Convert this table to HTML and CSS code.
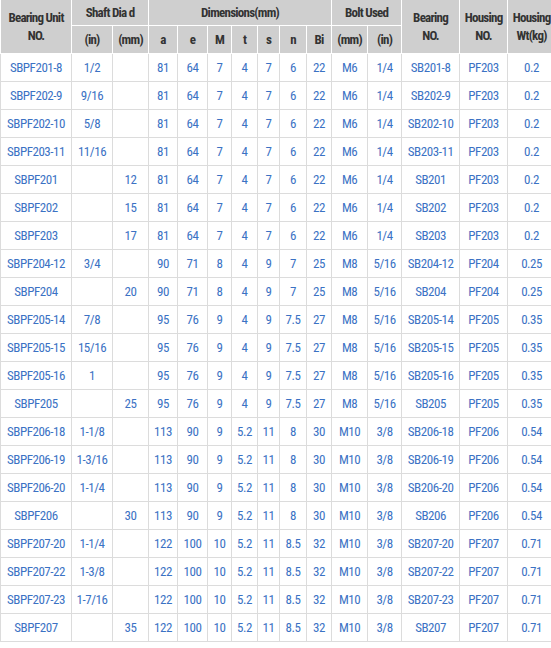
FILE: index.html
```html
<!DOCTYPE html>
<html>
<head>
<meta charset="utf-8">
<link rel="stylesheet" href="styles.css">
</head>
<body>
<table class="spec">
<colgroup>
<col class="c1"><col class="c2"><col class="c3"><col class="c4"><col class="c5"><col class="c6"><col class="c7"><col class="c8"><col class="c9"><col class="c10"><col class="c11"><col class="c12"><col class="c13"><col class="c14"><col class="c15">
</colgroup>
<thead>
<tr class="h1">
<th rowspan="2">Bearing Unit<br>NO.</th>
<th colspan="2">Shaft Dia d</th>
<th colspan="7">Dimensions(mm)</th>
<th colspan="2">Bolt Used</th>
<th rowspan="2">Bearing<br>NO.</th>
<th rowspan="2">Housing<br>NO.</th>
<th rowspan="2">Housing<br>Wt(kg)</th>
</tr>
<tr class="h2">
<th>(in)</th><th>(mm)</th><th>a</th><th>e</th><th>M</th><th>t</th><th>s</th><th>n</th><th>Bi</th><th>(mm)</th><th>(in)</th>
</tr>
</thead>
<tbody>
<tr><td>SBPF201-8</td><td>1/2</td><td></td><td>81</td><td>64</td><td>7</td><td>4</td><td>7</td><td>6</td><td>22</td><td>M6</td><td>1/4</td><td>SB201-8</td><td>PF203</td><td>0.2</td></tr>
<tr><td>SBPF202-9</td><td>9/16</td><td></td><td>81</td><td>64</td><td>7</td><td>4</td><td>7</td><td>6</td><td>22</td><td>M6</td><td>1/4</td><td>SB202-9</td><td>PF203</td><td>0.2</td></tr>
<tr><td>SBPF202-10</td><td>5/8</td><td></td><td>81</td><td>64</td><td>7</td><td>4</td><td>7</td><td>6</td><td>22</td><td>M6</td><td>1/4</td><td>SB202-10</td><td>PF203</td><td>0.2</td></tr>
<tr><td>SBPF203-11</td><td>11/16</td><td></td><td>81</td><td>64</td><td>7</td><td>4</td><td>7</td><td>6</td><td>22</td><td>M6</td><td>1/4</td><td>SB203-11</td><td>PF203</td><td>0.2</td></tr>
<tr><td>SBPF201</td><td></td><td>12</td><td>81</td><td>64</td><td>7</td><td>4</td><td>7</td><td>6</td><td>22</td><td>M6</td><td>1/4</td><td>SB201</td><td>PF203</td><td>0.2</td></tr>
<tr><td>SBPF202</td><td></td><td>15</td><td>81</td><td>64</td><td>7</td><td>4</td><td>7</td><td>6</td><td>22</td><td>M6</td><td>1/4</td><td>SB202</td><td>PF203</td><td>0.2</td></tr>
<tr><td>SBPF203</td><td></td><td>17</td><td>81</td><td>64</td><td>7</td><td>4</td><td>7</td><td>6</td><td>22</td><td>M6</td><td>1/4</td><td>SB203</td><td>PF203</td><td>0.2</td></tr>
<tr><td>SBPF204-12</td><td>3/4</td><td></td><td>90</td><td>71</td><td>8</td><td>4</td><td>9</td><td>7</td><td>25</td><td>M8</td><td>5/16</td><td>SB204-12</td><td>PF204</td><td>0.25</td></tr>
<tr><td>SBPF204</td><td></td><td>20</td><td>90</td><td>71</td><td>8</td><td>4</td><td>9</td><td>7</td><td>25</td><td>M8</td><td>5/16</td><td>SB204</td><td>PF204</td><td>0.25</td></tr>
<tr><td>SBPF205-14</td><td>7/8</td><td></td><td>95</td><td>76</td><td>9</td><td>4</td><td>9</td><td>7.5</td><td>27</td><td>M8</td><td>5/16</td><td>SB205-14</td><td>PF205</td><td>0.35</td></tr>
<tr><td>SBPF205-15</td><td>15/16</td><td></td><td>95</td><td>76</td><td>9</td><td>4</td><td>9</td><td>7.5</td><td>27</td><td>M8</td><td>5/16</td><td>SB205-15</td><td>PF205</td><td>0.35</td></tr>
<tr><td>SBPF205-16</td><td>1</td><td></td><td>95</td><td>76</td><td>9</td><td>4</td><td>9</td><td>7.5</td><td>27</td><td>M8</td><td>5/16</td><td>SB205-16</td><td>PF205</td><td>0.35</td></tr>
<tr><td>SBPF205</td><td></td><td>25</td><td>95</td><td>76</td><td>9</td><td>4</td><td>9</td><td>7.5</td><td>27</td><td>M8</td><td>5/16</td><td>SB205</td><td>PF205</td><td>0.35</td></tr>
<tr><td>SBPF206-18</td><td>1-1/8</td><td></td><td>113</td><td>90</td><td>9</td><td>5.2</td><td>11</td><td>8</td><td>30</td><td>M10</td><td>3/8</td><td>SB206-18</td><td>PF206</td><td>0.54</td></tr>
<tr><td>SBPF206-19</td><td>1-3/16</td><td></td><td>113</td><td>90</td><td>9</td><td>5.2</td><td>11</td><td>8</td><td>30</td><td>M10</td><td>3/8</td><td>SB206-19</td><td>PF206</td><td>0.54</td></tr>
<tr><td>SBPF206-20</td><td>1-1/4</td><td></td><td>113</td><td>90</td><td>9</td><td>5.2</td><td>11</td><td>8</td><td>30</td><td>M10</td><td>3/8</td><td>SB206-20</td><td>PF206</td><td>0.54</td></tr>
<tr><td>SBPF206</td><td></td><td>30</td><td>113</td><td>90</td><td>9</td><td>5.2</td><td>11</td><td>8</td><td>30</td><td>M10</td><td>3/8</td><td>SB206</td><td>PF206</td><td>0.54</td></tr>
<tr><td>SBPF207-20</td><td>1-1/4</td><td></td><td>122</td><td>100</td><td>10</td><td>5.2</td><td>11</td><td>8.5</td><td>32</td><td>M10</td><td>3/8</td><td>SB207-20</td><td>PF207</td><td>0.71</td></tr>
<tr><td>SBPF207-22</td><td>1-3/8</td><td></td><td>122</td><td>100</td><td>10</td><td>5.2</td><td>11</td><td>8.5</td><td>32</td><td>M10</td><td>3/8</td><td>SB207-22</td><td>PF207</td><td>0.71</td></tr>
<tr><td>SBPF207-23</td><td>1-7/16</td><td></td><td>122</td><td>100</td><td>10</td><td>5.2</td><td>11</td><td>8.5</td><td>32</td><td>M10</td><td>3/8</td><td>SB207-23</td><td>PF207</td><td>0.71</td></tr>
<tr><td>SBPF207</td><td></td><td>35</td><td>122</td><td>100</td><td>10</td><td>5.2</td><td>11</td><td>8.5</td><td>32</td><td>M10</td><td>3/8</td><td>SB207</td><td>PF207</td><td>0.71</td></tr>
</tbody>
</table>
</body>
</html>
```
FILE: styles.css
```css
html, body {
  margin: 0;
  padding: 0;
  overflow: hidden;
  background: #fff;
}
.spec {
  border-collapse: collapse;
  table-layout: fixed;
  width: 555px;
}
.spec th,
.spec td {
  font-family: Roboto, "Liberation Sans", sans-serif;
  font-stretch: 75%;
}
.c1 { width: 71px; }
.c2 { width: 41px; }
.c3 { width: 36px; }
.c4 { width: 29px; }
.c5 { width: 30px; }
.c6 { width: 24px; }
.c7 { width: 26px; }
.c8 { width: 22px; }
.c9 { width: 27px; }
.c10 { width: 25px; }
.c11 { width: 36px; }
.c12 { width: 34px; }
.c13 { width: 58px; }
.c14 { width: 48px; }
.c15 { width: 48px; }
.spec th {
  background: #cfcfcf;
  color: #333;
  font-size: 13px;
  letter-spacing: -0.75px;
  font-weight: bold;
  border: 1px solid #fff;
  padding: 0;
  line-height: 18px;
  text-align: center;
  vertical-align: middle;
  white-space: nowrap;
}
.spec .h1 th { height: 25px; border-top: 0; }
.spec .h2 th { height: 27px; }
.spec td {
  color: #3b72c4;
  font-size: 13px;
  letter-spacing: -0.45px;
  border: 1px solid #dcdcdc;
  padding: 0;
  height: 27px;
  text-align: center;
  vertical-align: middle;
  white-space: nowrap;
}
```
